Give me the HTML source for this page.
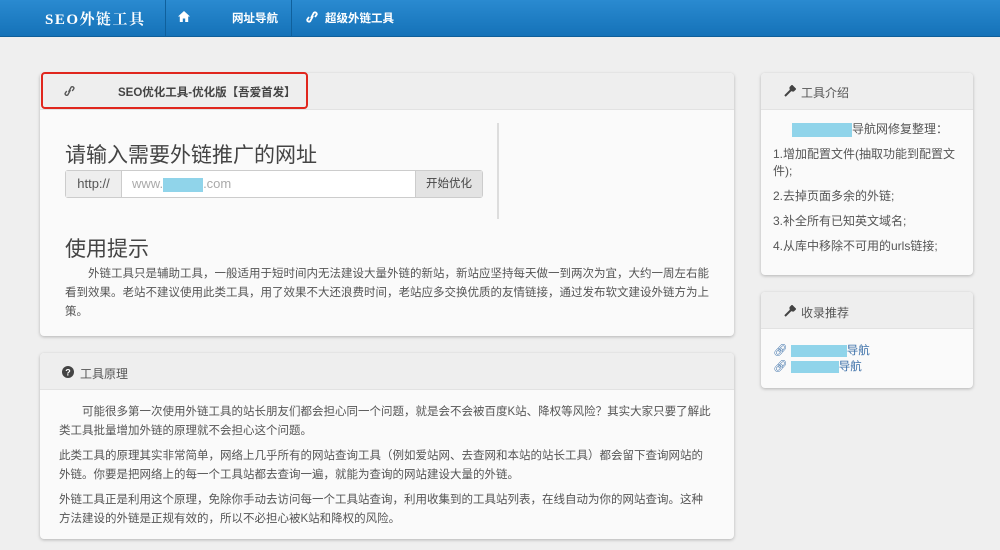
<!DOCTYPE html>
<html><head><meta charset="utf-8"><style>
*{margin:0;padding:0;box-sizing:border-box}
body{width:1000px;height:550px;background:#efefef;font-family:"Liberation Sans","Noto Sans CJK SC",sans-serif;position:relative;overflow:hidden;color:#444}
.nav{position:absolute;left:0;top:0;width:1000px;height:37px;background:linear-gradient(#2a8ad0,#1572b8);border-bottom:1px solid #0f5f9a}
.nav .t{position:absolute;color:#fff;font-size:13px;top:10px;font-weight:bold}
.sep{position:absolute;top:0;width:1px;height:37px;background:#0f609c}
.panel{position:absolute;background:#fafafa;border-radius:4px;box-shadow:0 1px 3px rgba(0,0,0,.25)}
.ph{height:37px;background:#eeeeee;border-bottom:1px solid #e2e2e2;border-radius:4px 4px 0 0;font-size:12px;color:#555;position:relative}
.p{font-size:11.5px;line-height:19px;color:#555}
.blue{display:inline-block;background:#90d4ea;height:14px;vertical-align:middle}
a{color:#3a6fa8;text-decoration:none}
svg{position:absolute}
</style></head><body>
<div class="nav">
<div class="t" style="left:45px;top:8px;font-size:15px;letter-spacing:1.5px;font-family:'Liberation Serif','Noto Serif CJK SC',serif">SEO外链工具</div>
<div class="sep" style="left:165px"></div>
<svg style="left:178px;top:11px" width="12" height="11" viewBox="0 0 12 11"><path d="M6 0L0 5.5h1.8V11h3V7.5h2.4V11h3V5.5H12z" fill="#fff"/></svg>
<div class="t" style="left:232px;font-size:11.5px">网址导航</div>
<div class="sep" style="left:291px"></div>
<svg style="left:306px;top:11px" width="12" height="12" viewBox="0 0 12 12"><g fill="none" stroke="#fff" stroke-width="1.8"><path d="M5 7L7.8 1.8a1.8 1.8 0 0 1 3 1.6L9 6"/><path d="M7 5L4.2 10.2a1.8 1.8 0 0 1-3-1.6L3 6"/></g></svg>
<div class="t" style="left:325px;font-size:11.5px">超级外链工具</div>
</div>

<div class="panel" style="left:40px;top:73px;width:694px;height:263px">
<div class="ph"><svg style="left:24px;top:12px" width="11" height="12" viewBox="0 0 12 12"><g fill="none" stroke="#555" stroke-width="1.5"><path d="M5 7L7.8 1.8a1.8 1.8 0 0 1 3 1.6L9 6"/><path d="M7 5L4.2 10.2a1.8 1.8 0 0 1-3-1.6L3 6"/></g></svg><span style="position:absolute;left:78px;top:11px;font-weight:bold;font-size:11.5px;color:#444">SEO优化工具-优化版【吾爱首发】</span></div>
<div style="position:absolute;left:457px;top:50px;width:2px;height:96px;background:#ddd"></div>
<div style="position:absolute;left:25px;top:66px;font-size:21px;color:#444">请输入需要外链推广的网址</div>
<div style="position:absolute;left:25px;top:97px;width:418px;height:28px;border:1px solid #ccc;border-radius:3px;background:#fff;font-size:13px">
<div style="position:absolute;left:0;top:0;width:56px;height:26px;background:#eee;border-right:1px solid #ccc;line-height:26px;text-align:center;color:#555">http://</div>
<div style="position:absolute;left:66px;top:0;line-height:26px;color:#aaa">www.<span class="blue" style="width:40px"></span>.com</div>
<div style="position:absolute;right:0;top:0;width:67px;height:26px;background:#e3e3e3;border-left:1px solid #ccc;line-height:26px;text-align:center;color:#444;font-size:11.5px">开始优化</div>
</div>
<div style="position:absolute;left:25px;top:160px;font-size:21px;color:#444">使用提示</div>
<div class="p" style="position:absolute;left:25px;top:192px;width:650px;text-indent:2em">外链工具只是辅助工具，一般适用于短时间内无法建设大量外链的新站，新站应坚持每天做一到两次为宜，大约一周左右能看到效果。老站不建议使用此类工具，用了效果不大还浪费时间，老站应多交换优质的友情链接，通过发布软文建设外链方为上策。</div>
</div>
<div style="position:absolute;left:41px;top:72px;width:267px;height:37px;border:2px solid #e0261d;border-radius:4px"></div>

<div class="panel" style="left:40px;top:353px;width:694px;height:186px">
<div class="ph"><svg style="left:22px;top:13px" width="12" height="12" viewBox="0 0 12 12"><circle cx="6" cy="6" r="6" fill="#444"/><text x="6" y="9.5" font-size="9" font-weight="bold" fill="#fff" text-anchor="middle" font-family="Liberation Sans">?</text></svg><span style="position:absolute;left:40px;top:12px">工具原理</span></div>
<div class="p" style="position:absolute;left:19px;top:50px;width:655px">
<div style="text-indent:2em;margin-bottom:6px">可能很多第一次使用外链工具的站长朋友们都会担心同一个问题，就是会不会被百度K站、降权等风险？其实大家只要了解此类工具批量增加外链的原理就不会担心这个问题。</div>
<div style="margin-bottom:6px">此类工具的原理其实非常简单，网络上几乎所有的网站查询工具（例如爱站网、去查网和本站的站长工具）都会留下查询网站的外链。你要是把网络上的每一个工具站都去查询一遍，就能为查询的网站建设大量的外链。</div>
<div>外链工具正是利用这个原理，免除你手动去访问每一个工具站查询，利用收集到的工具站列表，在线自动为你的网站查询。这种方法建设的外链是正规有效的，所以不必担心被K站和降权的风险。</div>
</div>
</div>

<div class="panel" style="left:761px;top:73px;width:212px;height:202px">
<div class="ph"><svg style="left:23px;top:12px" width="12" height="12" viewBox="0 0 12 12"><path d="M1 11L7 5M6.5 2.5a2.5 2.5 0 0 0 3 3L11 4 8 1z" stroke="#444" stroke-width="2" fill="#444"/></svg><span style="position:absolute;left:40px;top:11px">工具介绍</span></div>
<div class="p" style="position:absolute;left:12px;top:48px;width:190px;font-size:12px;line-height:17px">
<div style="padding-left:19px;margin-bottom:8px"><span class="blue" style="width:60px"></span>导航网修复整理：</div>
<div style="margin-bottom:8px">1.增加配置文件(抽取功能到配置文件);</div>
<div style="margin-bottom:8px">2.去掉页面多余的外链;</div>
<div style="margin-bottom:8px">3.补全所有已知英文域名;</div>
<div>4.从库中移除不可用的urls链接;</div>
</div>
</div>

<div class="panel" style="left:761px;top:292px;width:212px;height:96px">
<div class="ph"><svg style="left:23px;top:13px" width="12" height="12" viewBox="0 0 12 12"><path d="M1 11L7 5M6.5 2.5a2.5 2.5 0 0 0 3 3L11 4 8 1z" stroke="#444" stroke-width="2" fill="#444"/></svg><span style="position:absolute;left:40px;top:12px">收录推荐</span></div>
<div style="position:absolute;left:12px;top:51px;font-size:11.5px;line-height:16px">
<div><a>🔗︎ <span class="blue" style="width:56px;height:12px"></span>导航</a></div>
<div><a>🔗︎ <span class="blue" style="width:48px;height:12px"></span>导航</a></div>
</div>
</div>
</body></html>
